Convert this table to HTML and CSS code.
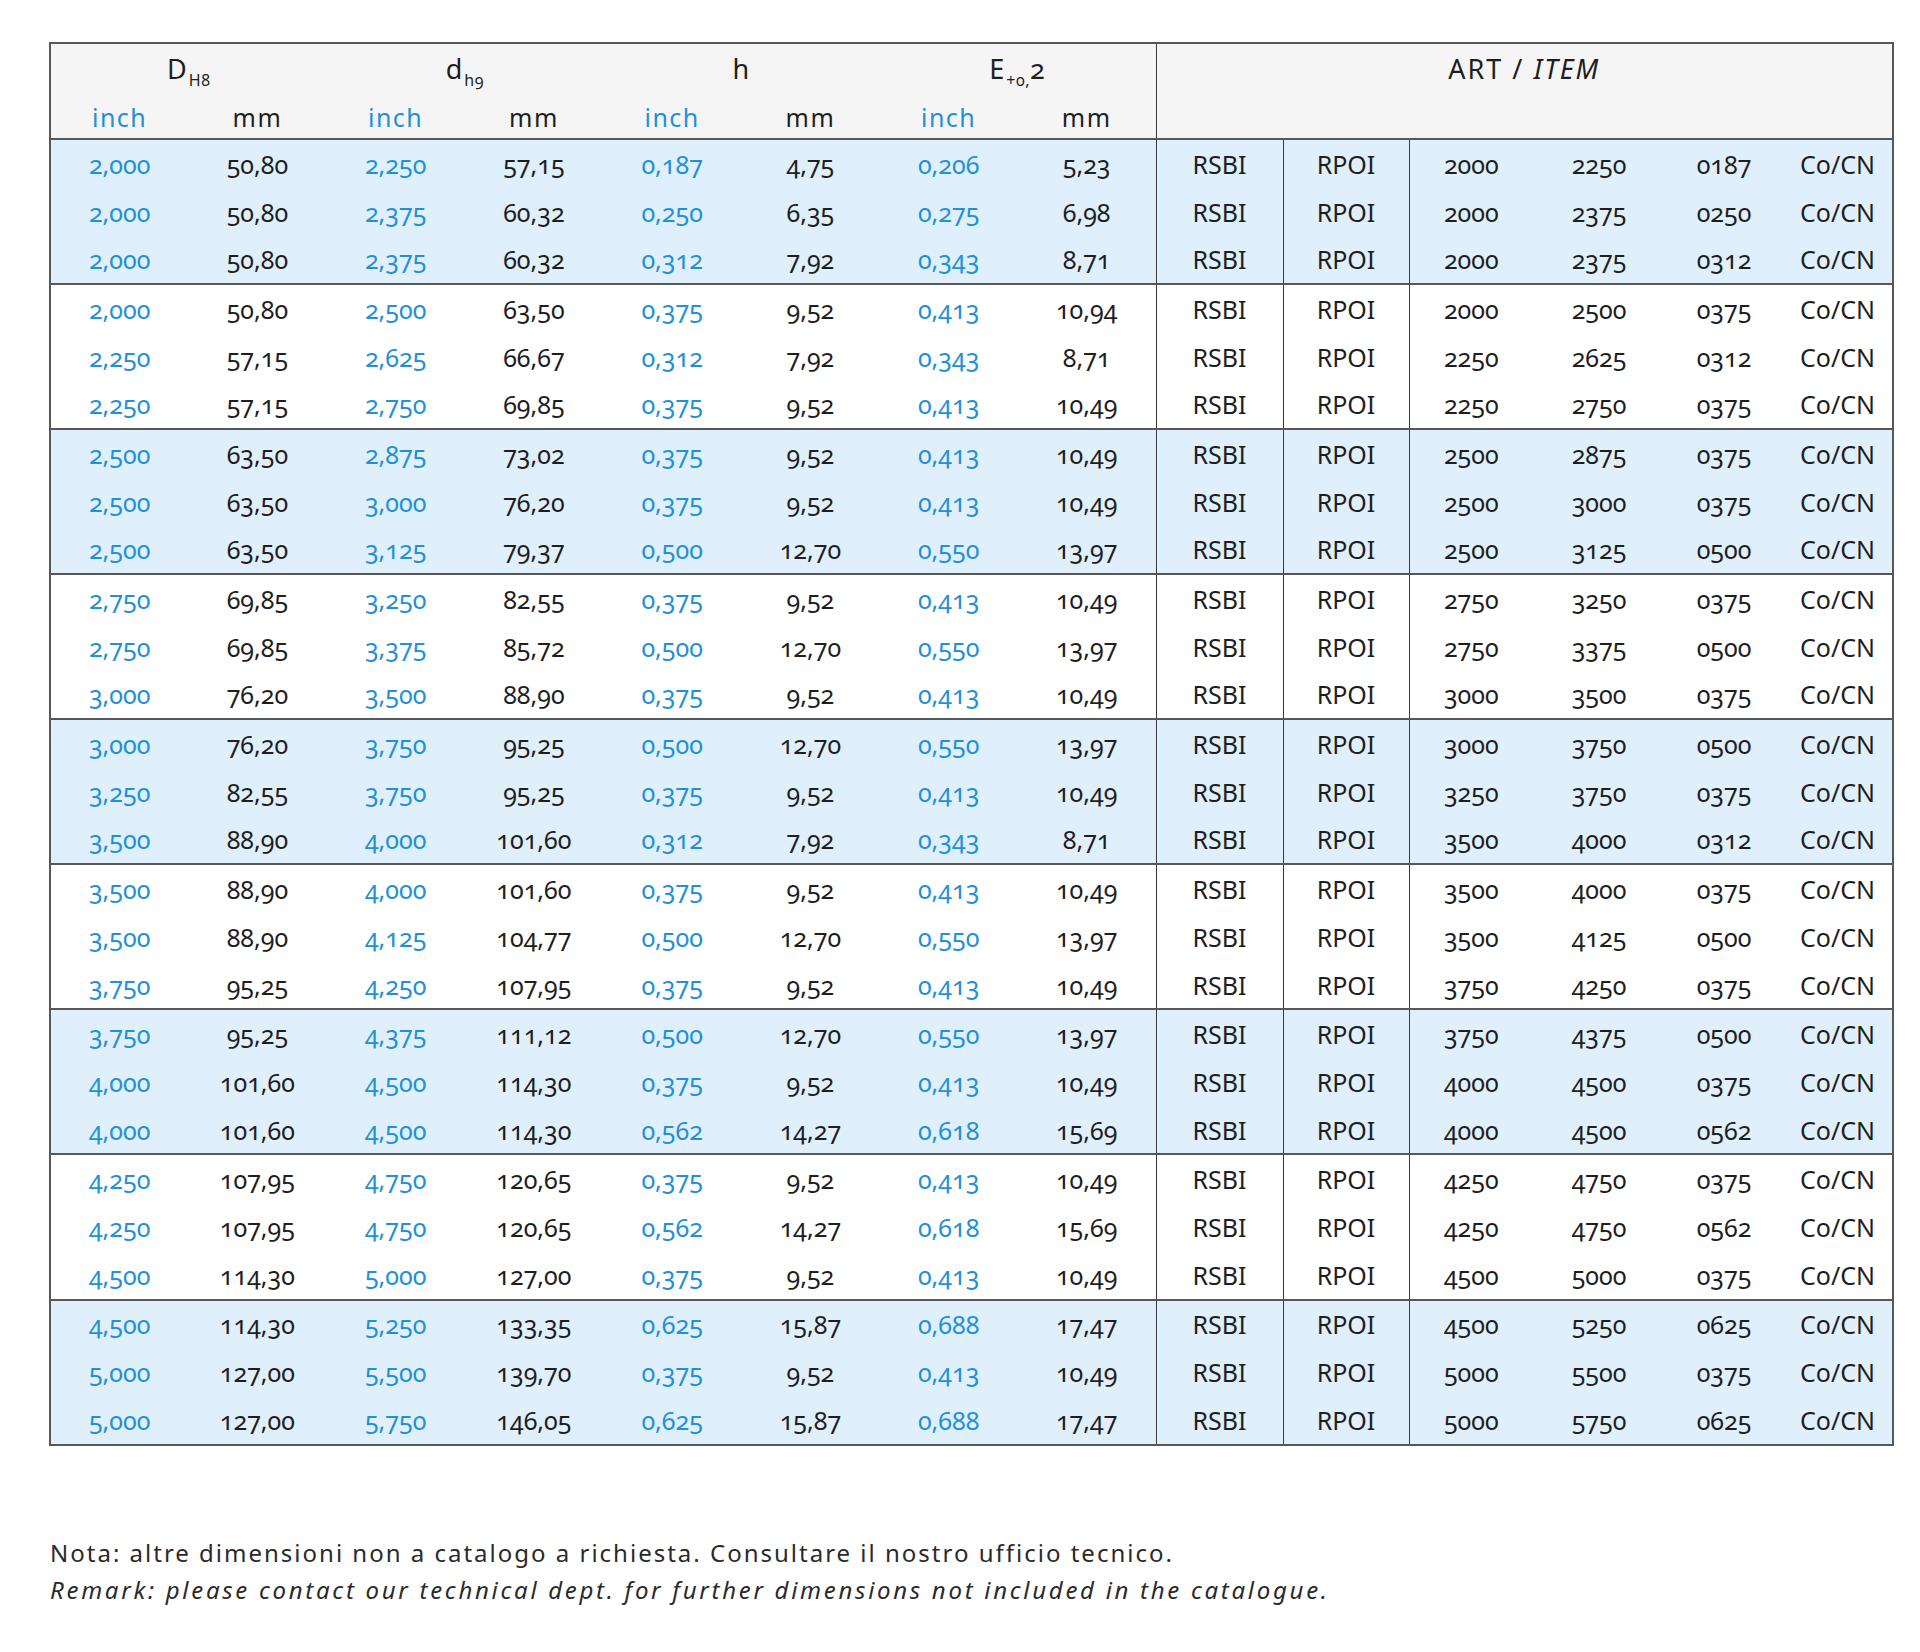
FILE: index.html
```html
<!DOCTYPE html>
<html lang="it">
<head>
<meta charset="utf-8">
<title>Dimensioni RSBI / RPOI</title>
<link rel="stylesheet" href="styles.css">
</head>
<body>
<main class="page">
<table class="spec">
<colgroup>
<col class="c-dim"><col class="c-dim"><col class="c-dim"><col class="c-dim">
<col class="c-dim"><col class="c-dim"><col class="c-dim"><col class="c-dim">
<col class="c-rsbi"><col class="c-rpoi">
<col class="c-code1"><col class="c-code2"><col class="c-code3"><col class="c-code4">
</colgroup>
<thead>
<tr class="head-main">
<th colspan="2">D<sub>H8</sub></th>
<th colspan="2">d<sub>h9</sub></th>
<th colspan="2">h</th>
<th colspan="2">E<sub>+0,</sub>2</th>
<th colspan="6" rowspan="2" class="art">ART / <em>ITEM</em></th>
</tr>
<tr class="head-units">
<th class="inch">inch</th><th>mm</th>
<th class="inch">inch</th><th>mm</th>
<th class="inch">inch</th><th>mm</th>
<th class="inch">inch</th><th>mm</th>
</tr>
</thead>
<tbody class="band">
<tr><td class="inch">2,000</td><td>50,80</td><td class="inch">2,250</td><td>57,15</td><td class="inch">0,187</td><td>4,75</td><td class="inch">0,206</td><td>5,23</td><td class="sep">RSBI</td><td class="sep">RPOI</td><td class="sep">2000</td><td>2250</td><td>0187</td><td>Co/CN</td></tr>
<tr><td class="inch">2,000</td><td>50,80</td><td class="inch">2,375</td><td>60,32</td><td class="inch">0,250</td><td>6,35</td><td class="inch">0,275</td><td>6,98</td><td class="sep">RSBI</td><td class="sep">RPOI</td><td class="sep">2000</td><td>2375</td><td>0250</td><td>Co/CN</td></tr>
<tr><td class="inch">2,000</td><td>50,80</td><td class="inch">2,375</td><td>60,32</td><td class="inch">0,312</td><td>7,92</td><td class="inch">0,343</td><td>8,71</td><td class="sep">RSBI</td><td class="sep">RPOI</td><td class="sep">2000</td><td>2375</td><td>0312</td><td>Co/CN</td></tr>
</tbody>
<tbody>
<tr><td class="inch">2,000</td><td>50,80</td><td class="inch">2,500</td><td>63,50</td><td class="inch">0,375</td><td>9,52</td><td class="inch">0,413</td><td>10,94</td><td class="sep">RSBI</td><td class="sep">RPOI</td><td class="sep">2000</td><td>2500</td><td>0375</td><td>Co/CN</td></tr>
<tr><td class="inch">2,250</td><td>57,15</td><td class="inch">2,625</td><td>66,67</td><td class="inch">0,312</td><td>7,92</td><td class="inch">0,343</td><td>8,71</td><td class="sep">RSBI</td><td class="sep">RPOI</td><td class="sep">2250</td><td>2625</td><td>0312</td><td>Co/CN</td></tr>
<tr><td class="inch">2,250</td><td>57,15</td><td class="inch">2,750</td><td>69,85</td><td class="inch">0,375</td><td>9,52</td><td class="inch">0,413</td><td>10,49</td><td class="sep">RSBI</td><td class="sep">RPOI</td><td class="sep">2250</td><td>2750</td><td>0375</td><td>Co/CN</td></tr>
</tbody>
<tbody class="band">
<tr><td class="inch">2,500</td><td>63,50</td><td class="inch">2,875</td><td>73,02</td><td class="inch">0,375</td><td>9,52</td><td class="inch">0,413</td><td>10,49</td><td class="sep">RSBI</td><td class="sep">RPOI</td><td class="sep">2500</td><td>2875</td><td>0375</td><td>Co/CN</td></tr>
<tr><td class="inch">2,500</td><td>63,50</td><td class="inch">3,000</td><td>76,20</td><td class="inch">0,375</td><td>9,52</td><td class="inch">0,413</td><td>10,49</td><td class="sep">RSBI</td><td class="sep">RPOI</td><td class="sep">2500</td><td>3000</td><td>0375</td><td>Co/CN</td></tr>
<tr><td class="inch">2,500</td><td>63,50</td><td class="inch">3,125</td><td>79,37</td><td class="inch">0,500</td><td>12,70</td><td class="inch">0,550</td><td>13,97</td><td class="sep">RSBI</td><td class="sep">RPOI</td><td class="sep">2500</td><td>3125</td><td>0500</td><td>Co/CN</td></tr>
</tbody>
<tbody>
<tr><td class="inch">2,750</td><td>69,85</td><td class="inch">3,250</td><td>82,55</td><td class="inch">0,375</td><td>9,52</td><td class="inch">0,413</td><td>10,49</td><td class="sep">RSBI</td><td class="sep">RPOI</td><td class="sep">2750</td><td>3250</td><td>0375</td><td>Co/CN</td></tr>
<tr><td class="inch">2,750</td><td>69,85</td><td class="inch">3,375</td><td>85,72</td><td class="inch">0,500</td><td>12,70</td><td class="inch">0,550</td><td>13,97</td><td class="sep">RSBI</td><td class="sep">RPOI</td><td class="sep">2750</td><td>3375</td><td>0500</td><td>Co/CN</td></tr>
<tr><td class="inch">3,000</td><td>76,20</td><td class="inch">3,500</td><td>88,90</td><td class="inch">0,375</td><td>9,52</td><td class="inch">0,413</td><td>10,49</td><td class="sep">RSBI</td><td class="sep">RPOI</td><td class="sep">3000</td><td>3500</td><td>0375</td><td>Co/CN</td></tr>
</tbody>
<tbody class="band">
<tr><td class="inch">3,000</td><td>76,20</td><td class="inch">3,750</td><td>95,25</td><td class="inch">0,500</td><td>12,70</td><td class="inch">0,550</td><td>13,97</td><td class="sep">RSBI</td><td class="sep">RPOI</td><td class="sep">3000</td><td>3750</td><td>0500</td><td>Co/CN</td></tr>
<tr><td class="inch">3,250</td><td>82,55</td><td class="inch">3,750</td><td>95,25</td><td class="inch">0,375</td><td>9,52</td><td class="inch">0,413</td><td>10,49</td><td class="sep">RSBI</td><td class="sep">RPOI</td><td class="sep">3250</td><td>3750</td><td>0375</td><td>Co/CN</td></tr>
<tr><td class="inch">3,500</td><td>88,90</td><td class="inch">4,000</td><td>101,60</td><td class="inch">0,312</td><td>7,92</td><td class="inch">0,343</td><td>8,71</td><td class="sep">RSBI</td><td class="sep">RPOI</td><td class="sep">3500</td><td>4000</td><td>0312</td><td>Co/CN</td></tr>
</tbody>
<tbody>
<tr><td class="inch">3,500</td><td>88,90</td><td class="inch">4,000</td><td>101,60</td><td class="inch">0,375</td><td>9,52</td><td class="inch">0,413</td><td>10,49</td><td class="sep">RSBI</td><td class="sep">RPOI</td><td class="sep">3500</td><td>4000</td><td>0375</td><td>Co/CN</td></tr>
<tr><td class="inch">3,500</td><td>88,90</td><td class="inch">4,125</td><td>104,77</td><td class="inch">0,500</td><td>12,70</td><td class="inch">0,550</td><td>13,97</td><td class="sep">RSBI</td><td class="sep">RPOI</td><td class="sep">3500</td><td>4125</td><td>0500</td><td>Co/CN</td></tr>
<tr><td class="inch">3,750</td><td>95,25</td><td class="inch">4,250</td><td>107,95</td><td class="inch">0,375</td><td>9,52</td><td class="inch">0,413</td><td>10,49</td><td class="sep">RSBI</td><td class="sep">RPOI</td><td class="sep">3750</td><td>4250</td><td>0375</td><td>Co/CN</td></tr>
</tbody>
<tbody class="band">
<tr><td class="inch">3,750</td><td>95,25</td><td class="inch">4,375</td><td>111,12</td><td class="inch">0,500</td><td>12,70</td><td class="inch">0,550</td><td>13,97</td><td class="sep">RSBI</td><td class="sep">RPOI</td><td class="sep">3750</td><td>4375</td><td>0500</td><td>Co/CN</td></tr>
<tr><td class="inch">4,000</td><td>101,60</td><td class="inch">4,500</td><td>114,30</td><td class="inch">0,375</td><td>9,52</td><td class="inch">0,413</td><td>10,49</td><td class="sep">RSBI</td><td class="sep">RPOI</td><td class="sep">4000</td><td>4500</td><td>0375</td><td>Co/CN</td></tr>
<tr><td class="inch">4,000</td><td>101,60</td><td class="inch">4,500</td><td>114,30</td><td class="inch">0,562</td><td>14,27</td><td class="inch">0,618</td><td>15,69</td><td class="sep">RSBI</td><td class="sep">RPOI</td><td class="sep">4000</td><td>4500</td><td>0562</td><td>Co/CN</td></tr>
</tbody>
<tbody>
<tr><td class="inch">4,250</td><td>107,95</td><td class="inch">4,750</td><td>120,65</td><td class="inch">0,375</td><td>9,52</td><td class="inch">0,413</td><td>10,49</td><td class="sep">RSBI</td><td class="sep">RPOI</td><td class="sep">4250</td><td>4750</td><td>0375</td><td>Co/CN</td></tr>
<tr><td class="inch">4,250</td><td>107,95</td><td class="inch">4,750</td><td>120,65</td><td class="inch">0,562</td><td>14,27</td><td class="inch">0,618</td><td>15,69</td><td class="sep">RSBI</td><td class="sep">RPOI</td><td class="sep">4250</td><td>4750</td><td>0562</td><td>Co/CN</td></tr>
<tr><td class="inch">4,500</td><td>114,30</td><td class="inch">5,000</td><td>127,00</td><td class="inch">0,375</td><td>9,52</td><td class="inch">0,413</td><td>10,49</td><td class="sep">RSBI</td><td class="sep">RPOI</td><td class="sep">4500</td><td>5000</td><td>0375</td><td>Co/CN</td></tr>
</tbody>
<tbody class="band">
<tr><td class="inch">4,500</td><td>114,30</td><td class="inch">5,250</td><td>133,35</td><td class="inch">0,625</td><td>15,87</td><td class="inch">0,688</td><td>17,47</td><td class="sep">RSBI</td><td class="sep">RPOI</td><td class="sep">4500</td><td>5250</td><td>0625</td><td>Co/CN</td></tr>
<tr><td class="inch">5,000</td><td>127,00</td><td class="inch">5,500</td><td>139,70</td><td class="inch">0,375</td><td>9,52</td><td class="inch">0,413</td><td>10,49</td><td class="sep">RSBI</td><td class="sep">RPOI</td><td class="sep">5000</td><td>5500</td><td>0375</td><td>Co/CN</td></tr>
<tr><td class="inch">5,000</td><td>127,00</td><td class="inch">5,750</td><td>146,05</td><td class="inch">0,625</td><td>15,87</td><td class="inch">0,688</td><td>17,47</td><td class="sep">RSBI</td><td class="sep">RPOI</td><td class="sep">5000</td><td>5750</td><td>0625</td><td>Co/CN</td></tr>
</tbody>
</table>
<div class="notes">
<p class="note-it">Nota: altre dimensioni non a catalogo a richiesta. Consultare il nostro ufficio tecnico.</p>
<p class="note-en">Remark: please contact our technical dept. for further dimensions not included in the catalogue.</p>
</div>
</main>
</body>
</html>
```
FILE: styles.css
```css
html, body {
  margin: 0;
  padding: 0;
  background: #ffffff;
}

body {
  font-family: "Noto Sans", "Open Sans", "DejaVu Sans", sans-serif;
  color: #1e1e1e;
}

.page {
  padding: 42px 0 0 49px;
}

.spec {
  width: 1843px;
  table-layout: fixed;
  border-collapse: collapse;
  border: 2px solid #575757;
  font-size: 25px;
  font-variant-numeric: oldstyle-nums;
  font-feature-settings: "onum" 1;
}

.c-dim { width: 138.25px; }
.c-rsbi { width: 127px; }
.c-rpoi { width: 126px; }
.c-code1 { width: 124px; }
.c-code2 { width: 132px; }
.c-code3 { width: 118px; }
.c-code4 { width: 110px; }

.spec th,
.spec td {
  padding: 0;
  text-align: center;
  font-weight: 400;
  white-space: nowrap;
}

.spec thead {
  background: #f5f5f5;
  border-bottom: 2px solid #575757;
}

.head-main th {
  height: 48px;
  font-size: 27px;
  letter-spacing: 1px;
  vertical-align: middle;
}

.head-main sub {
  font-size: 16px;
  vertical-align: -7px;
  line-height: 0;
  letter-spacing: 0.5px;
  margin-left: 1px;
}

.head-units th {
  height: 38px;
  font-size: 25px;
  letter-spacing: 1.5px;
  vertical-align: top;
  padding-top: 8px;
}

.head-main th.art {
  vertical-align: top;
  padding-top: 6px;
  border-left: 1px solid #3a3a3a;
  letter-spacing: 2px;
}

.art em {
  font-style: italic;
}

.spec .inch {
  color: #2390d6;
}

.spec tbody {
  border-top: 2px solid #575757;
}

.spec tbody.band {
  background: #dff0fc;
}

.spec td {
  height: 47.7px;
  vertical-align: middle;
}

.spec td.sep {
  border-left: 1px solid #3a3a3a;
}

.notes {
  margin-top: 88px;
  font-size: 24px;
  color: #2a2a2a;
  line-height: 37px;
}

.notes p {
  margin: 0;
  padding-left: 1px;
}

.note-it {
  letter-spacing: 2px;
}

.note-en {
  font-style: italic;
  letter-spacing: 2.7px;
}
```
